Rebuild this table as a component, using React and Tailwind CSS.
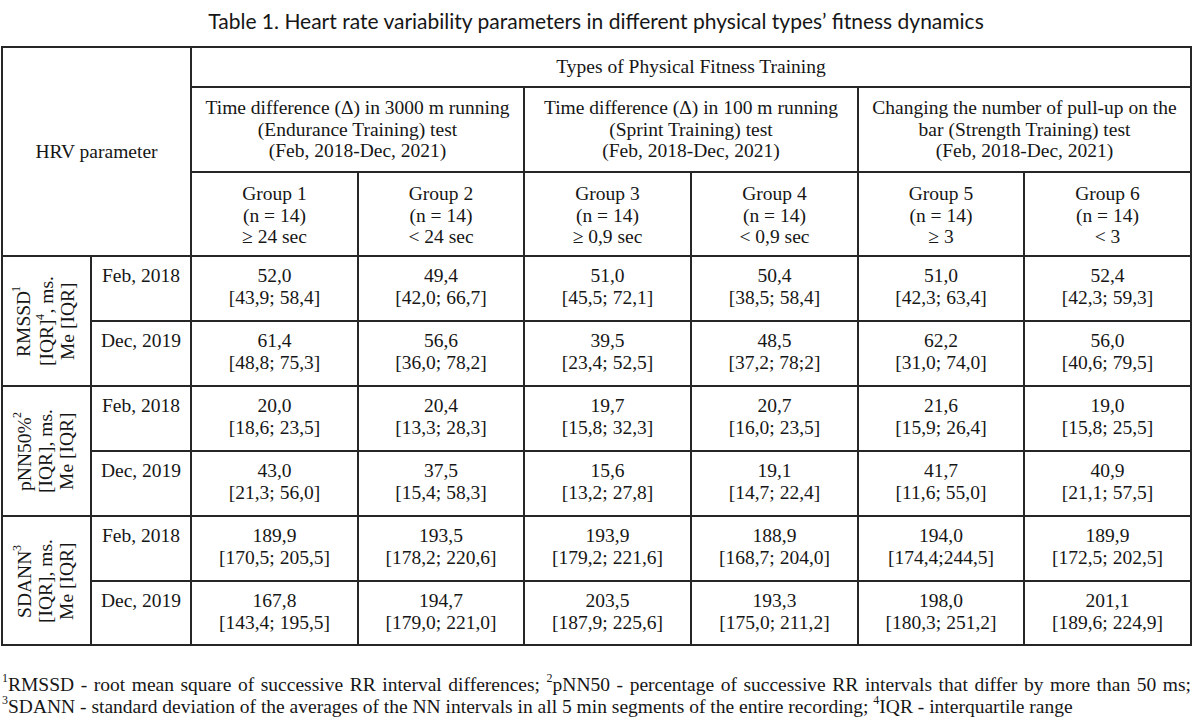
import React from "react";

const serif = { fontFamily: '"Liberation Serif", "Times New Roman", serif' };

const groups = [
  ["Group 1", "(n = 14)", "≥ 24 sec"],
  ["Group 2", "(n = 14)", "< 24 sec"],
  ["Group 3", "(n = 14)", "≥ 0,9 sec"],
  ["Group 4", "(n = 14)", "< 0,9 sec"],
  ["Group 5", "(n = 14)", "≥ 3"],
  ["Group 6", "(n = 14)", "< 3"],
];

const tests = [
  ["Time difference (Δ) in 3000 m running", "(Endurance Training) test", "(Feb, 2018-Dec, 2021)"],
  ["Time difference (Δ) in 100 m running", "(Sprint Training) test", "(Feb, 2018-Dec, 2021)"],
  ["Changing the number of pull-up on the", "bar (Strength Training) test", "(Feb, 2018-Dec, 2021)"],
];

const blocks = [
  {
    label: [["RMSSD", "1"], ["[IQR]", "4", ", ms."], ["Me [IQR]"]],
    rows: [
      ["Feb, 2018", [["52,0", "[43,9; 58,4]"], ["49,4", "[42,0; 66,7]"], ["51,0", "[45,5; 72,1]"], ["50,4", "[38,5; 58,4]"], ["51,0", "[42,3; 63,4]"], ["52,4", "[42,3; 59,3]"]]],
      ["Dec, 2019", [["61,4", "[48,8; 75,3]"], ["56,6", "[36,0; 78,2]"], ["39,5", "[23,4; 52,5]"], ["48,5", "[37,2; 78;2]"], ["62,2", "[31,0; 74,0]"], ["56,0", "[40,6; 79,5]"]]],
    ],
  },
  {
    label: [["pNN50%", "2"], ["[IQR], ms."], ["Me [IQR]"]],
    rows: [
      ["Feb, 2018", [["20,0", "[18,6; 23,5]"], ["20,4", "[13,3; 28,3]"], ["19,7", "[15,8; 32,3]"], ["20,7", "[16,0; 23,5]"], ["21,6", "[15,9; 26,4]"], ["19,0", "[15,8; 25,5]"]]],
      ["Dec, 2019", [["43,0", "[21,3; 56,0]"], ["37,5", "[15,4; 58,3]"], ["15,6", "[13,2; 27,8]"], ["19,1", "[14,7; 22,4]"], ["41,7", "[11,6; 55,0]"], ["40,9", "[21,1; 57,5]"]]],
    ],
  },
  {
    label: [["SDANN", "3"], ["[IQR], ms."], ["Me [IQR]"]],
    rows: [
      ["Feb, 2018", [["189,9", "[170,5; 205,5]"], ["193,5", "[178,2; 220,6]"], ["193,9", "[179,2; 221,6]"], ["188,9", "[168,7; 204,0]"], ["194,0", "[174,4;244,5]"], ["189,9", "[172,5; 202,5]"]]],
      ["Dec, 2019", [["167,8", "[143,4; 195,5]"], ["194,7", "[179,0; 221,0]"], ["203,5", "[187,9; 225,6]"], ["193,3", "[175,0; 211,2]"], ["198,0", "[180,3; 251,2]"], ["201,1", "[189,6; 224,9]"]]],
    ],
  },
];

const cell = "border-r-2 border-b-2 border-[#262626]";

function Sup({ children }) {
  return <sup className="text-[12px] relative top-[-1px] align-super leading-none">{children}</sup>;
}

export default function App() {
  return (
    <div className="w-[1200px] h-[726px] bg-white overflow-hidden text-[#161616]">
      <div
        className="h-[46px] flex items-start justify-center pt-[8px] text-[21px] leading-[26px]"
        style={{ fontFamily: 'Lato, "Open Sans", sans-serif' }}
      >
        <span className="mr-[8px]">Table 1. Heart rate variability parameters in different physical types’ fitness dynamics</span>
      </div>

      <div
        className="ml-[1px] w-[1191px] grid grid-cols-[89px_100px_167px_166px_167px_167px_166px_167px] grid-rows-[40px_85px_84px_65px_65px_65px_65px_65px_64px] border-t-2 border-l-2 border-[#262626] text-[19.5px] leading-[21.5px]"
        style={serif}
      >
        <div className={`${cell} col-span-2 row-span-3 flex items-center justify-center`}>HRV parameter</div>
        <div className={`${cell} col-span-6 flex items-center justify-center`}>Types of Physical Fitness Training</div>
        {tests.map((t, i) => (
          <div key={i} className={`${cell} col-span-2 flex flex-col items-center justify-center`}>
            {t.map((l, j) => (
              <div key={j} className="whitespace-nowrap">{l}</div>
            ))}
          </div>
        ))}
        {groups.map((g, i) => (
          <div key={i} className={`${cell} flex flex-col items-center justify-center pt-[3px]`}>
            {g.map((l, j) => (
              <div key={j} className="whitespace-nowrap">{l}</div>
            ))}
          </div>
        ))}
        {blocks.map((b, bi) => (
          <React.Fragment key={bi}>
            <div className={`${cell} row-span-2 flex items-center justify-center pr-[6px]`}>
              <div className="[writing-mode:vertical-rl] rotate-180 text-center leading-[21px]">
                {b.label.map((l, li) => (
                  <div key={li} className="whitespace-nowrap">
                    {l[0]}
                    {l[1] && <Sup>{l[1]}</Sup>}
                    {l[2]}
                  </div>
                ))}
              </div>
            </div>
            {b.rows.map((r, ri) => (
              <React.Fragment key={ri}>
                <div className={`${cell} pt-[8px] text-center whitespace-nowrap`}>{r[0]}</div>
                {r[1].map((v, vi) => (
                  <div key={vi} className={`${cell} pt-[8px] flex flex-col items-center leading-[22px]`}>
                    <div>{v[0]}</div>
                    <div>{v[1]}</div>
                  </div>
                ))}
              </React.Fragment>
            ))}
          </React.Fragment>
        ))}
      </div>

      <div className="mt-[27px] pl-[2px] pr-[9px] text-[19.5px] leading-[21px]" style={serif}>
        <div className="text-justify [text-align-last:justify] whitespace-nowrap">
          <Sup>1</Sup>RMSSD - root mean square of successive RR interval differences; <Sup>2</Sup>pNN50 - percentage of successive RR intervals that differ by more than 50&nbsp;ms;
        </div>
        <div className="whitespace-nowrap">
          <Sup>3</Sup>SDANN - standard deviation of the averages of the NN intervals in all 5 min segments of the entire recording; <Sup>4</Sup>IQR - interquartile range
        </div>
      </div>
    </div>
  );
}
